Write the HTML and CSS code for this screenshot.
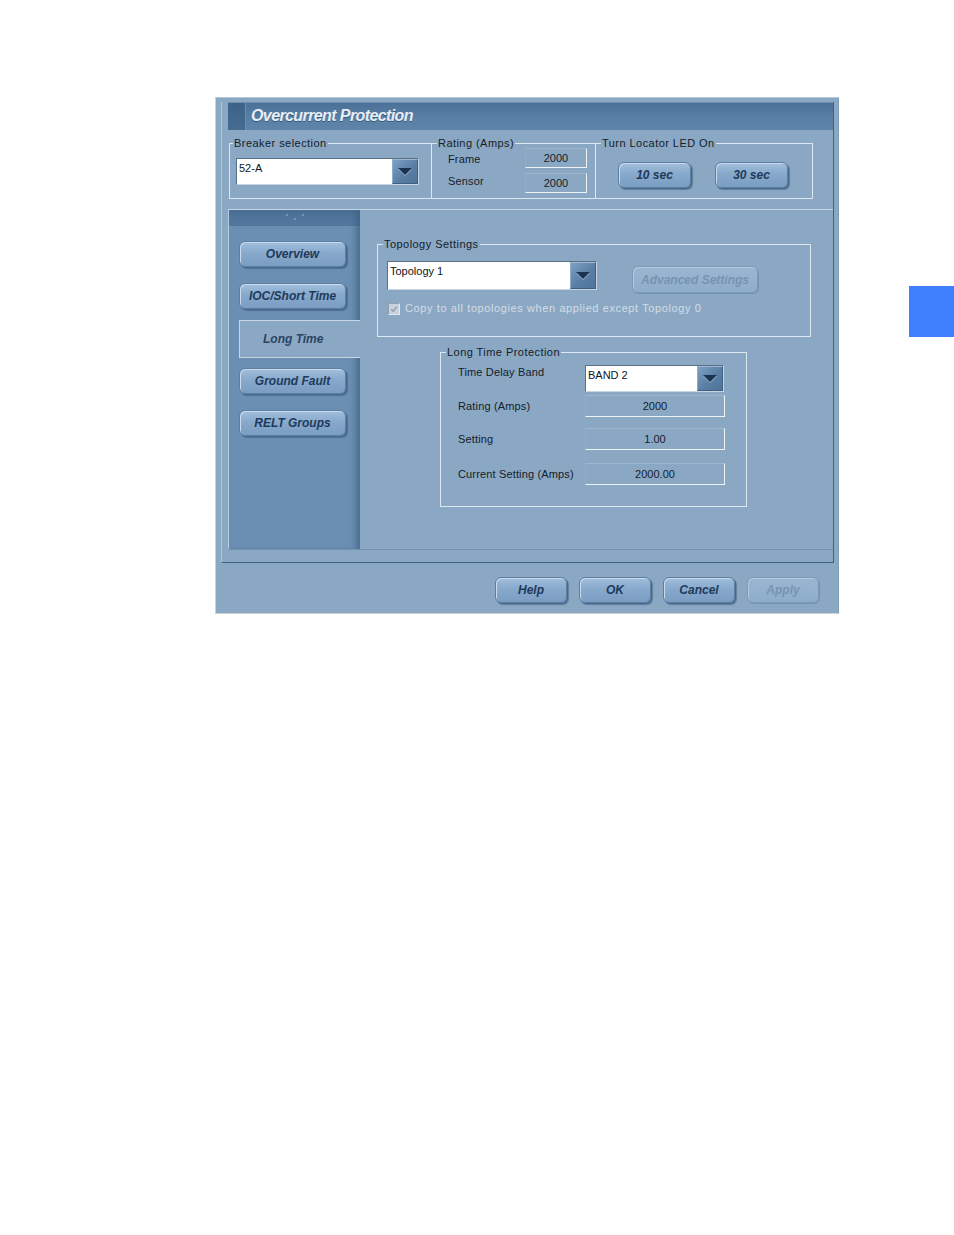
FILE: index.html
```html
<!DOCTYPE html>
<html>
<head>
<meta charset="utf-8">
<title>Overcurrent Protection</title>
<link rel="stylesheet" href="styles.css">
</head>
<body>
<div class="page">
  <div class="dialog">
    <div class="inner">
      <div class="titlebar">
        <div class="stripe"></div>
        <div class="title">Overcurrent Protection</div>
      </div>
      <div class="toprow">
        <fieldset class="grp breaker">
          <legend>Breaker selection</legend>
          <div class="combo combo-breaker">
            <span class="combo-text">52-A</span>
            <span class="combo-btn"><span class="tri"></span></span>
          </div>
        </fieldset>
        <fieldset class="grp rating">
          <legend>Rating (Amps)</legend>
          <div class="rgrid">
            <span class="lbl lbl-frame">Frame</span><span class="vbox vbox-sm">2000</span>
            <span class="lbl lbl-sensor">Sensor</span><span class="vbox vbox-sm">2000</span>
          </div>
        </fieldset>
        <fieldset class="grp locator">
          <legend>Turn Locator LED On</legend>
          <div class="btnrow">
            <button class="btn btn-sec">10 sec</button>
            <button class="btn btn-sec">30 sec</button>
          </div>
        </fieldset>
      </div>
      <div class="content">
        <div class="nav">
          <div class="navhead"><i class="dot"></i><i class="dot dot-low"></i><i class="dot"></i></div>
          <div class="navitems">
            <button class="btn navbtn">Overview</button>
            <button class="btn navbtn nb-ioc">IOC/Short Time</button>
            <div class="tab">Long Time</div>
            <button class="btn navbtn nb-gf">Ground Fault</button>
            <button class="btn navbtn nb-relt">RELT Groups</button>
          </div>
        </div>
        <div class="main">
          <fieldset class="grp topo">
            <legend>Topology Settings</legend>
            <div class="toporow">
              <div class="combo combo-topo">
                <span class="combo-text">Topology 1</span>
                <span class="combo-btn"><span class="tri"></span></span>
              </div>
              <button class="btn btn-adv disabled">Advanced Settings</button>
            </div>
            <div class="checkrow">
              <span class="check"><svg viewBox="0 0 12 12" width="12" height="12"><path d="M2.5 6.2 L5 8.6 L9.6 3.2" fill="none" stroke="#8e9fb0" stroke-width="1.8"/></svg></span>
              <span class="checklabel">Copy to all topologies when applied except Topology 0</span>
            </div>
          </fieldset>
          <fieldset class="grp longtime">
            <legend>Long Time Protection</legend>
            <div class="lrow lrow-1">
              <span class="lbl lcol lbl-top">Time Delay Band</span>
              <div class="combo combo-band">
                <span class="combo-text">BAND 2</span>
                <span class="combo-btn"><span class="tri"></span></span>
              </div>
            </div>
            <div class="lrow lrow-2">
              <span class="lbl lcol">Rating (Amps)</span>
              <span class="vbox vbox-lg">2000</span>
            </div>
            <div class="lrow lrow-3">
              <span class="lbl lcol">Setting</span>
              <span class="vbox vbox-lg">1.00</span>
            </div>
            <div class="lrow lrow-4">
              <span class="lbl lcol">Current Setting (Amps)</span>
              <span class="vbox vbox-lg">2000.00</span>
            </div>
          </fieldset>
        </div>
      </div>
    </div>
    <div class="footer">
      <button class="btn fbtn">Help</button>
      <button class="btn fbtn">OK</button>
      <button class="btn fbtn">Cancel</button>
      <button class="btn fbtn disabled">Apply</button>
    </div>
  </div>
  <div class="marker"></div>
</div>
</body>
</html>
```
FILE: styles.css
```css
html, body {
  margin: 0;
  padding: 0;
  background: #ffffff;
}

body {
  width: 954px;
  height: 1235px;
  font-family: "Liberation Sans", Arial, sans-serif;
  font-size: 11px;
  color: #15202b;
}

.page {
  display: flex;
  align-items: flex-start;
  padding-left: 215px;
  padding-top: 97px;
}

.dialog {
  box-sizing: border-box;
  width: 624px;
  height: 517px;
  background: #8aa8c3;
  border-top: 1px solid #b4c8db;
  border-left: 1px solid #c4d4e3;
  border-right: 1px solid #7d9cb8;
  border-bottom: 1px solid #c9d3c8;
  padding-top: 4px;
  padding-left: 5px;
  display: flex;
  flex-direction: column;
}

.inner {
  width: 605px;
  height: 460px;
  border-left: 1px solid #b3c7da;
  border-right: 1px solid #3f6283;
  border-bottom: 1px solid #3f6283;
  padding-left: 6px;
  display: flex;
  flex-direction: column;
}

/* title */
.titlebar {
  height: 28px;
  display: flex;
  background: linear-gradient(#4b7198, #5a80a6 60%, #5e84aa);
  border-top: 1px solid #6e90b2;
  box-sizing: border-box;
}

.stripe {
  width: 17px;
  background: linear-gradient(#3d6287, #476c92);
  border-right: 1px solid #6a8db0;
}

.title {
  padding-left: 5px;
  font-family: "Liberation Sans", Arial, sans-serif;
  font-weight: bold;
  font-style: italic;
  font-size: 16px;
  letter-spacing: -0.6px;
  line-height: 26px;
  color: #e8eef5;
  text-shadow: 0 1px 0 #34577a;
}

/* group boxes */
fieldset.grp {
  margin: 0;
  padding: 0;
  min-width: 0;
  box-sizing: border-box;
  border: 1px solid #dde7f0;
}

fieldset.grp legend {
  padding: 0 1px;
  margin-left: 5px;
  font-size: 11px;
  line-height: 13px;
  letter-spacing: 0.45px;
  color: #15202b;
}

.toprow {
  display: flex;
  margin-top: 7px;
  margin-left: 1px;
  height: 62px;
}

.breaker {
  width: 203px;
  height: 62px;
}

.breaker legend {
  margin-left: 3px !important;
}

.rating {
  width: 164px;
  height: 62px;
  border-left: none !important;
}

.locator {
  width: 217px;
  height: 62px;
  border-left: none !important;
}

/* combo boxes */
.combo {
  box-sizing: border-box;
  display: flex;
  background: #ffffff;
  border: 1px solid;
  border-color: #5a6f84 #c7d4e1 #c7d4e1 #5a6f84;
}

.combo-text {
  flex: 1;
  padding: 2px 2px 0 2px;
  font-size: 11px;
  line-height: 14px;
  color: #0d141b;
}

.combo-btn {
  width: 26px;
  display: flex;
  align-items: center;
  justify-content: center;
  background: linear-gradient(135deg, #7da0c3, #5a7fa5 55%, #4f7499);
  border-top: 1px solid #9db8d2;
  border-left: 1px solid #8eabc8;
  border-right: 1px solid #3e5f80;
  border-bottom: 1px solid #3e5f80;
  box-sizing: border-box;
}

.tri {
  width: 0;
  height: 0;
  border-left: 7px solid transparent;
  border-right: 7px solid transparent;
  border-top: 7px solid #1b3351;
  filter: drop-shadow(0 1px 0 #9bb6d1);
}

.combo-breaker {
  width: 183px;
  height: 27px;
  margin-top: 8px;
  margin-left: 6px;
}

.combo-topo {
  width: 210px;
  height: 29px;
}

.combo-band {
  width: 139px;
  height: 27px;
}

/* rating grid */
.rgrid {
  display: grid;
  grid-template-columns: 77px 62px;
  grid-template-rows: 20px 20px;
  row-gap: 5px;
  margin-top: -2px;
  margin-left: 16px;
}

.lbl {
  font-size: 11px;
  line-height: 13px;
  letter-spacing: 0.15px;
  color: #15202b;
}

.lbl-frame {
  align-self: start;
  margin-top: 5px;
}

.lbl-sensor {
  align-self: start;
  margin-top: 2px;
}

.vbox {
  box-sizing: border-box;
  display: flex;
  align-items: center;
  justify-content: center;
  border: 1px solid;
  border-color: #9fb7cc #eef3f8 #eef3f8 #93adc5;
  font-size: 11px;
  color: #15202b;
}

.vbox-sm {
  width: 62px;
  height: 20px;
}

.vbox-lg {
  width: 140px;
  height: 22px;
}

/* buttons */
.btn {
  box-sizing: border-box;
  margin: 0;
  padding: 0;
  border: 1px solid #5b7ea2;
  border-radius: 6px;
  background: linear-gradient(#a2bfdc, #87a9cc 45%, #7a9dc2);
  box-shadow: inset 1px 1px 0 #c9dbec, 1px 1px 0 #47698c, 2px 2px 1px rgba(45, 75, 105, 0.45);
  font-family: "Liberation Sans", Arial, sans-serif;
  font-weight: bold;
  font-style: italic;
  font-size: 12px;
  color: #213a5b;
  text-align: center;
  cursor: default;
}

.btn.disabled {
  border-color: #7b9ab8;
  background: linear-gradient(#9ab6d1, #8eadcb);
  box-shadow: inset 1px 1px 0 #b6cbdf, 1px 1px 0 #7593b1;
  color: #7793b1;
}

.btnrow {
  display: flex;
  gap: 24px;
  margin-top: 12px;
  margin-left: 22px;
}

.btn-sec {
  width: 73px;
  height: 26px;
}

/* content */
.content {
  display: flex;
  margin-top: 10px;
  height: 341px;
  box-sizing: border-box;
  border-top: 1px solid #c8d7e5;
  border-bottom: 1px solid #7290ad;
}

.nav {
  box-sizing: border-box;
  width: 132px;
  height: 339px;
  background: #6b8fb2;
  border-left: 1px solid #b9cde0;
  box-shadow: inset -7px 0 6px -3px #4a6d92;
  display: flex;
  flex-direction: column;
}

.navhead {
  height: 16px;
  background: linear-gradient(#4b6f94, #557a9f);
  display: flex;
  justify-content: center;
  gap: 6px;
  padding-top: 4px;
  box-sizing: border-box;
  box-shadow: inset -7px 0 6px -3px #40638a;
}

.dot {
  display: block;
  width: 2px;
  height: 2px;
  background: #7f9fbf;
  border-radius: 1px;
}

.dot-low {
  margin-top: 4px;
}

.navitems {
  display: flex;
  flex-direction: column;
  align-items: flex-start;
  padding-left: 10px;
  padding-top: 15px;
}

.navbtn {
  width: 107px;
  height: 26px;
}

.nb-ioc {
  margin-top: 16px;
}

.tab {
  box-sizing: border-box;
  width: 121px;
  height: 38px;
  margin-top: 11px;
  background: #8aa8c3;
  border-top: 1px solid #c6d6e5;
  border-left: 1px solid #c6d6e5;
  border-bottom: 1px solid #c6d6e5;
  padding-left: 23px;
  font-weight: bold;
  font-style: italic;
  font-size: 12px;
  line-height: 36px;
  color: #2a4465;
}

.nb-gf {
  margin-top: 10px;
}

.nb-relt {
  margin-top: 16px;
}

.main {
  flex: 1;
  display: flex;
  flex-direction: column;
  align-items: flex-start;
}

.topo {
  width: 434px;
  height: 99px;
  margin: 28px 0 0 17px !important;
}

.toporow {
  display: flex;
  align-items: flex-start;
  margin-top: 10px;
  margin-left: 9px;
}

.btn-adv {
  width: 126px;
  height: 27px;
  margin-top: 5px;
  margin-left: 35px;
}

.checkrow {
  display: flex;
  align-items: center;
  margin-top: 9px;
  margin-left: 10px;
}

.check {
  box-sizing: border-box;
  width: 12px;
  height: 12px;
  background: #c7d2dd;
  border: 1px solid;
  border-color: #8f9fb0 #e1e8ef #e1e8ef #8f9fb0;
  display: flex;
  align-items: center;
  justify-content: center;
}

.check svg {
  display: block;
  width: 10px;
  height: 10px;
}

.checklabel {
  margin-left: 5px;
  font-size: 11px;
  line-height: 13px;
  letter-spacing: 0.6px;
  color: #d4dde6;
}

.longtime {
  width: 307px;
  height: 161px;
  margin: 9px 0 0 80px !important;
}

.lrow {
  display: flex;
  align-items: center;
  margin-left: 17px;
}

.lcol {
  width: 127px;
}

.lrow-1 {
  margin-top: 6px;
  align-items: flex-start;
}

.lbl-top {
  padding-top: 1px;
}

.lrow-2 {
  margin-top: 3px;
}

.lrow-3 {
  margin-top: 11px;
}

.lrow-4 {
  margin-top: 13px;
}

/* footer */
.footer {
  display: flex;
  justify-content: flex-end;
  gap: 12px;
  margin-top: 14px;
  padding-right: 19px;
}

.fbtn {
  width: 72px;
  height: 26px;
}

.marker {
  width: 45px;
  height: 51px;
  margin-left: 70px;
  margin-top: 189px;
  background: #4080ff;
}
```
